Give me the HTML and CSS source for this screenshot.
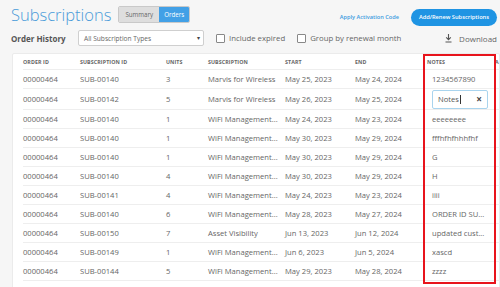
FILE: index.html
```html
<!DOCTYPE html>
<html lang="en">

<head>
    <meta charset="UTF-8">
    <meta name="viewport" content="width=device-width, initial-scale=1.0">
    <title>Subscriptions</title>
    <link rel="stylesheet" href="styles.css">
</head>

<body>
    <div class="top">
        <h1 class="title">Subscriptions</h1>
        <div class="toggle">
            <span class="tab">Summary</span>
            <span class="tab on">Orders</span>
        </div>
        <div class="actions">
            <a class="link">Apply Activation Code</a>
            <span class="btn">Add/Renew Subscriptions</span>
        </div>
    </div>
    <div class="filters">
        <span class="label">Order History</span>
        <div class="select">
            <span>All Subscription Types</span>
            <span class="caret">&#9662;</span>
        </div>
        <label class="check"><span class="box"></span>Include expired</label>
        <label class="check"><span class="box"></span>Group by renewal month</label>
        <span class="download">
            <svg width="9" height="10" viewBox="0 0 9 10">
                <path d="M4.5 1v5.5M2.2 4.3l2.3 2.3 2.3-2.3M1.5 9h6" fill="none" stroke="#555" stroke-width="1.1"/>
            </svg>
            Download
        </span>
    </div>
    <div class="card">
        <table class="grid">
            <colgroup>
                <col class="c1"><col class="c2"><col class="c3"><col class="c4">
                <col class="c5"><col class="c6"><col class="c7"><col class="c8">
            </colgroup>
            <thead>
                <tr>
                    <th>Order ID</th>
                    <th>Subscription ID</th>
                    <th>Units</th>
                    <th>Subscription</th>
                    <th>Start</th>
                    <th>End</th>
                    <th>Notes</th>
                    <th>A</th>
                </tr>
            </thead>
            <tbody>
                <tr><td>00000464</td><td>SUB-00140</td><td>3</td><td>Marvis for Wireless</td><td>May 25, 2023</td><td>May 24, 2024</td><td class="note">1234567890</td><td></td></tr>
                <tr class="editing"><td>00000464</td><td>SUB-00142</td><td>5</td><td>Marvis for Wireless</td><td>May 26, 2023</td><td>May 25, 2024</td>
                    <td class="note"><div class="input">Notes<span class="cursor"></span><span class="clear">&times;</span></div></td><td></td></tr>
                <tr><td>00000464</td><td>SUB-00140</td><td>1</td><td>WiFi Management...</td><td>May 24, 2023</td><td>May 23, 2024</td><td class="note">eeeeeeee</td><td></td></tr>
                <tr><td>00000464</td><td>SUB-00140</td><td>1</td><td>WiFi Management...</td><td>May 30, 2023</td><td>May 29, 2024</td><td class="note">fffhfhfhhhfhf</td><td></td></tr>
                <tr><td>00000464</td><td>SUB-00140</td><td>1</td><td>WiFi Management...</td><td>May 30, 2023</td><td>May 29, 2024</td><td class="note">G</td><td></td></tr>
                <tr><td>00000464</td><td>SUB-00140</td><td>4</td><td>WiFi Management...</td><td>May 30, 2023</td><td>May 29, 2024</td><td class="note">H</td><td></td></tr>
                <tr><td>00000464</td><td>SUB-00141</td><td>4</td><td>WiFi Management...</td><td>May 24, 2023</td><td>May 23, 2024</td><td class="note">iiii</td><td></td></tr>
                <tr><td>00000464</td><td>SUB-00140</td><td>6</td><td>WiFi Management...</td><td>May 28, 2023</td><td>May 27, 2024</td><td class="note">ORDER ID SU...</td><td></td></tr>
                <tr><td>00000464</td><td>SUB-00150</td><td>7</td><td>Asset Visibility</td><td>Jun 13, 2023</td><td>Jun 12, 2024</td><td class="note">updated cust...</td><td></td></tr>
                <tr><td>00000464</td><td>SUB-00149</td><td>1</td><td>WiFi Management...</td><td>Jun 6, 2023</td><td>Jun 5, 2024</td><td class="note">xascd</td><td></td></tr>
                <tr><td>00000464</td><td>SUB-00144</td><td>5</td><td>WiFi Management...</td><td>May 29, 2023</td><td>May 28, 2024</td><td class="note">zzzz</td><td></td></tr>
                <tr><td>00000464</td><td>SUB-00143</td><td>2</td><td>WiFi Management...</td><td>May 29, 2023</td><td>May 28, 2024</td><td class="note">aaaa</td><td></td></tr>
            </tbody>
        </table>
        <div class="highlight"></div>
    </div>
</body>

</html>
```

FILE: styles.css
```css
body {
    margin: 0;
    background: #f6f6f6;
    font-family: "Open Sans", "Liberation Sans", sans-serif;
    color: #666;
    overflow: hidden;
}

.top {
    display: flex;
    align-items: center;
    height: 30px;
    padding: 0 3px 0 11px;
}

.title {
    margin: 0;
    font-size: 16.5px;
    font-weight: 300;
    line-height: 30px;
    color: #4a9bd9;
}

.toggle {
    display: flex;
    margin: -1px 0 0 7px;
    height: 15px;
    border: 1px solid #c9c9c9;
    border-radius: 2px;
    overflow: hidden;
}

.tab {
    padding: 0 6px;
    font-size: 6.2px;
    line-height: 15px;
    background: #dedede;
    color: #666;
}

.tab.on {
    padding: 0 5px;
    background: #42a0e6;
    color: #fff;
}

.actions {
    display: flex;
    align-items: center;
    margin: 4px 0 0 auto;
    gap: 12px;
}

.link {
    font-size: 5.6px;
    font-weight: 600;
    color: #3d9be0;
}

.btn {
    padding: 0 8px;
    height: 17px;
    line-height: 17px;
    border-radius: 9px;
    background: #1f94e3;
    color: #fff;
    font-size: 5.7px;
    font-weight: 600;
}

.filters {
    display: flex;
    align-items: center;
    height: 16px;
    padding: 0 3px 0 11px;
    font-size: 8px;
}

.label {
    font-weight: 700;
    color: #555;
    width: 67px;
}

.select {
    display: flex;
    justify-content: space-between;
    align-items: center;
    width: 116px;
    height: 14px;
    padding: 0 3px 0 5px;
    background: #fff;
    border: 1px solid #cfcfcf;
    border-radius: 2px;
    font-size: 6.6px;
    color: #666;
}

.caret {
    font-size: 6px;
    color: #444;
}

.check {
    display: flex;
    align-items: center;
    margin-left: 12px;
    font-size: 7.8px;
    color: #666;
}

.box {
    width: 7px;
    height: 7px;
    margin-right: 4px;
    border: 1px solid #888;
    border-radius: 1px;
    background: #fff;
}

.download {
    display: flex;
    align-items: center;
    gap: 6px;
    margin-left: auto;
    color: #666;
}

.card {
    position: relative;
    margin: 7px 0 0 12px;
    background: #fff;
    border: 1px solid #ebebeb;
    border-radius: 2px;
}

.grid {
    table-layout: fixed;
    border-collapse: collapse;
    width: 560px;
    margin-left: 10px;
}

.c1 { width: 57px; }
.c2 { width: 86px; }
.c3 { width: 42px; }
.c4 { width: 77px; }
.c5 { width: 70px; }
.c6 { width: 72px; }
.c7 { width: 68px; }
.c8 { width: 88px; }

.grid th {
    height: 15px;
    padding: 0;
    text-align: left;
    font-size: 5.3px;
    font-weight: 700;
    text-transform: uppercase;
    color: #666;
    letter-spacing: 0.1px;
}

.grid td {
    height: 18px;
    padding: 0 4px 0 0;
    font-size: 7.6px;
    color: #666;
    white-space: nowrap;
    border-top: 1px solid #eee;
}

.grid td.note {
    padding-left: 5px;
}

.editing td {
    height: 20px;
}

.input {
    display: flex;
    align-items: center;
    width: 44px;
    height: 17px;
    padding: 0 5px;
    border: 1px solid #a9d4ee;
    border-radius: 2px;
    color: #555;
}

.cursor {
    width: 1px;
    height: 9px;
    margin-left: 1px;
    background: #333;
}

.clear {
    margin-left: auto;
    font-size: 10px;
    font-weight: 700;
    color: #444;
}

.highlight {
    position: absolute;
    left: 410px;
    top: 0;
    width: 69px;
    height: 226px;
    border: 2px solid #e8141c;
}
```
